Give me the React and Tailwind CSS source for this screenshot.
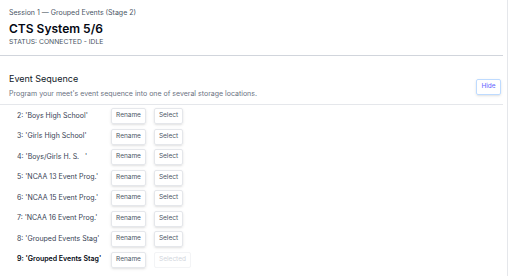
import React from 'react';

const slots = [
  { n: 2, name: "'Boys High School'" },
  { n: 3, name: "'Girls High School'" },
  { n: 4, name: "'Boys/Girls H. S.   '" },
  { n: 5, name: "'NCAA 13 Event Prog.'" },
  { n: 6, name: "'NCAA 15 Event Prog.'" },
  { n: 7, name: "'NCAA 16 Event Prog.'" },
  { n: 8, name: "'Grouped Events Stag'" },
  { n: 9, name: "'Grouped Events Stag'", current: true },
];

export default function App() {
  return (
    <div className="w-[508px] h-[276px] bg-white border-r border-gray-200 overflow-hidden font-['Inter',sans-serif] text-gray-900">
      {/* Header */}
      <div className="w-[503px] border-b border-gray-300 pl-[9px] pt-[8px] pb-[8px]">
        <p className="text-[7px] leading-[10px] text-gray-600">Session 1 — Grouped Events (Stage 2)</p>
        <h1 className="text-[12px] leading-[16px] font-semibold mt-[3px] text-gray-950">CTS System 5/6</h1>
        <p className="text-[6.8px] leading-[10px] text-gray-600 uppercase">Status: Connected - Idle</p>
      </div>

      {/* Event sequence */}
      <div className="w-[503px] border-b border-gray-200 pl-[9px] pr-[2px] pt-[17px] pb-[5px] flex items-end justify-between">
        <div>
          <h2 className="text-[9px] leading-[12px] text-gray-900">Event Sequence</h2>
          <p className="text-[7px] leading-[10px] mt-[4px] text-gray-500">Program your meet's event sequence into one of several storage locations.</p>
        </div>
        <button className="w-[25px] h-[16px] mb-[4px] rounded-[2px] border border-blue-200 shadow-sm text-[6.5px] text-indigo-500">Hide</button>
      </div>

      <ul className="pl-[17px] pt-[3px] flex flex-col gap-[4.5px]">
        {slots.map((s) => (
          <li key={s.n} className="flex items-center h-[16px]">
            <span className={`w-[94px] whitespace-pre text-[7px] ${s.current ? 'font-semibold text-gray-950' : 'text-gray-700'}`}>
              {s.n}: {s.name}
            </span>
            <button className="w-[35px] h-[16px] rounded-[2px] border border-gray-200 shadow-sm text-[6.5px] text-gray-600">Rename</button>
            {s.current ? (
              <button disabled className="ml-[8px] w-[37px] h-[16px] rounded-[2px] border border-gray-100 text-[6.5px] text-gray-300">Selected</button>
            ) : (
              <button className="ml-[8px] w-[29px] h-[16px] rounded-[2px] border border-gray-200 shadow-sm text-[6.5px] text-gray-600">Select</button>
            )}
          </li>
        ))}
      </ul>
    </div>
  );
}
